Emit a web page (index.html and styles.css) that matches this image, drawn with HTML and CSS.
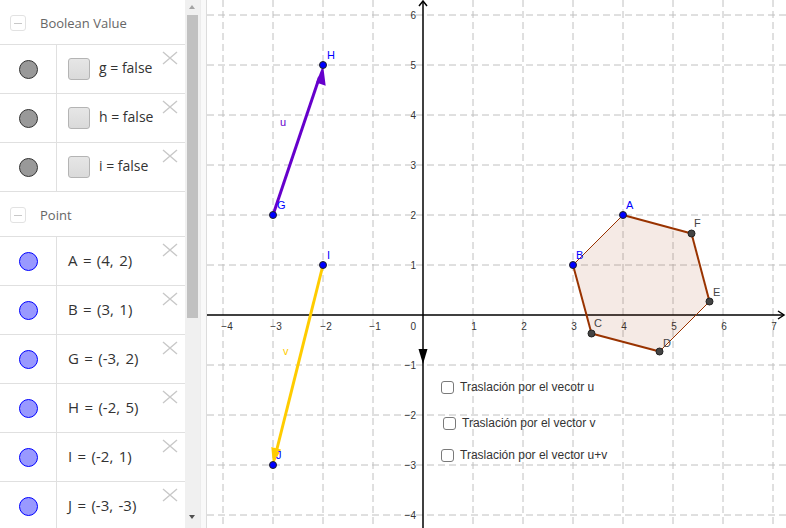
FILE: index.html
```html
<!DOCTYPE html>
<html>
<head>
<meta charset="utf-8">
<link rel="stylesheet" href="styles.css">
</head>
<body>
<div class="app">
  <aside class="sidebar">
    <div class="list">
      <div class="group">
        <span class="minus"><span class="minus-bar"></span></span>
        <span class="group-title">Boolean Value</span>
      </div>
      <div class="row">
        <div class="marker"><span class="dot dot-gray"></span></div>
        <div class="content"><span class="cb"></span><span class="expr">g = false</span></div>
        <svg class="close" viewBox="0 0 16 14"><path d="M1 1 L15 13 M15 1 L1 13"/></svg>
      </div>
      <div class="row">
        <div class="marker"><span class="dot dot-gray"></span></div>
        <div class="content"><span class="cb"></span><span class="expr">h = false</span></div>
        <svg class="close" viewBox="0 0 16 14"><path d="M1 1 L15 13 M15 1 L1 13"/></svg>
      </div>
      <div class="row">
        <div class="marker"><span class="dot dot-gray"></span></div>
        <div class="content"><span class="cb"></span><span class="expr">i = false</span></div>
        <svg class="close" viewBox="0 0 16 14"><path d="M1 1 L15 13 M15 1 L1 13"/></svg>
      </div>
      <div class="group">
        <span class="minus"><span class="minus-bar"></span></span>
        <span class="group-title">Point</span>
      </div>
      <div class="row">
        <div class="marker"><span class="dot dot-blue"></span></div>
        <div class="content"><span class="expr expr-pt">A = (4, 2)</span></div>
        <svg class="close" viewBox="0 0 16 14"><path d="M1 1 L15 13 M15 1 L1 13"/></svg>
      </div>
      <div class="row">
        <div class="marker"><span class="dot dot-blue"></span></div>
        <div class="content"><span class="expr expr-pt">B = (3, 1)</span></div>
        <svg class="close" viewBox="0 0 16 14"><path d="M1 1 L15 13 M15 1 L1 13"/></svg>
      </div>
      <div class="row">
        <div class="marker"><span class="dot dot-blue"></span></div>
        <div class="content"><span class="expr expr-pt">G = (-3, 2)</span></div>
        <svg class="close" viewBox="0 0 16 14"><path d="M1 1 L15 13 M15 1 L1 13"/></svg>
      </div>
      <div class="row">
        <div class="marker"><span class="dot dot-blue"></span></div>
        <div class="content"><span class="expr expr-pt">H = (-2, 5)</span></div>
        <svg class="close" viewBox="0 0 16 14"><path d="M1 1 L15 13 M15 1 L1 13"/></svg>
      </div>
      <div class="row">
        <div class="marker"><span class="dot dot-blue"></span></div>
        <div class="content"><span class="expr expr-pt">I = (-2, 1)</span></div>
        <svg class="close" viewBox="0 0 16 14"><path d="M1 1 L15 13 M15 1 L1 13"/></svg>
      </div>
      <div class="row">
        <div class="marker"><span class="dot dot-blue"></span></div>
        <div class="content"><span class="expr expr-pt">J = (-3, -3)</span></div>
        <svg class="close" viewBox="0 0 16 14"><path d="M1 1 L15 13 M15 1 L1 13"/></svg>
      </div>
    </div>
    <div class="scrollbar">
      <span class="arrow-up"></span>
      <span class="thumb"></span>
      <span class="arrow-down"></span>
    </div>
  </aside>
  <div class="splitter"></div>
  <main class="graph">
    <svg class="canvas" viewBox="207 0 579 528" width="579" height="528">
      <rect x="207" y="0" width="579" height="528" fill="#ffffff"/>
      <g class="grid">
        <line x1="223" y1="0" x2="223" y2="528"/>
        <line x1="273" y1="0" x2="273" y2="528"/>
        <line x1="323" y1="0" x2="323" y2="528"/>
        <line x1="373" y1="0" x2="373" y2="528"/>
        <line x1="473" y1="0" x2="473" y2="528"/>
        <line x1="523" y1="0" x2="523" y2="528"/>
        <line x1="573" y1="0" x2="573" y2="528"/>
        <line x1="623" y1="0" x2="623" y2="528"/>
        <line x1="673" y1="0" x2="673" y2="528"/>
        <line x1="723" y1="0" x2="723" y2="528"/>
        <line x1="773" y1="0" x2="773" y2="528"/>
        <line x1="207" y1="15" x2="786" y2="15"/>
        <line x1="207" y1="65" x2="786" y2="65"/>
        <line x1="207" y1="115" x2="786" y2="115"/>
        <line x1="207" y1="165" x2="786" y2="165"/>
        <line x1="207" y1="215" x2="786" y2="215"/>
        <line x1="207" y1="265" x2="786" y2="265"/>
        <line x1="207" y1="365" x2="786" y2="365"/>
        <line x1="207" y1="415" x2="786" y2="415"/>
        <line x1="207" y1="465" x2="786" y2="465"/>
        <line x1="207" y1="515" x2="786" y2="515"/>
      </g>
      <g class="axes">
        <line x1="207" y1="315" x2="784" y2="315"/>
        <polyline points="778,311 784,315 778,319"/>
        <line x1="423" y1="528" x2="423" y2="1"/>
        <polyline points="419,6 423,1 427,6"/>
      </g>
      <polygon points="418.5,349 427.5,349 423,364" fill="#000"/>
      <g class="ticks">
        <text x="227" y="330" text-anchor="middle">−4</text>
        <text x="276" y="330" text-anchor="middle">−3</text>
        <text x="326" y="330" text-anchor="middle">−2</text>
        <text x="375" y="330" text-anchor="middle">−1</text>
        <text x="416" y="330" text-anchor="end">0</text>
        <text x="474" y="330" text-anchor="middle">1</text>
        <text x="524" y="330" text-anchor="middle">2</text>
        <text x="574" y="330" text-anchor="middle">3</text>
        <text x="624" y="330" text-anchor="middle">4</text>
        <text x="674" y="330" text-anchor="middle">5</text>
        <text x="724" y="330" text-anchor="middle">6</text>
        <text x="774" y="330" text-anchor="middle">7</text>
        <text x="416" y="19" text-anchor="end">6</text>
        <text x="416" y="69" text-anchor="end">5</text>
        <text x="416" y="119" text-anchor="end">4</text>
        <text x="416" y="169" text-anchor="end">3</text>
        <text x="416" y="219" text-anchor="end">2</text>
        <text x="416" y="269" text-anchor="end">1</text>
        <text x="416" y="369" text-anchor="end">−1</text>
        <text x="416" y="419" text-anchor="end">−2</text>
        <text x="416" y="469" text-anchor="end">−3</text>
        <text x="416" y="519" text-anchor="end">−4</text>
      </g>
      <polygon class="poly-fill" points="623,215 691.5,233.5 709.5,301.5 659.5,351.5 591.5,333.5 573,265"/>
      <g class="poly-edge">
        <line x1="623" y1="215" x2="691.5" y2="233.5"/>
        <line x1="691.5" y1="233.5" x2="709.5" y2="301.5"/>
        <line x1="659.5" y1="351.5" x2="591.5" y2="333.5"/>
        <line x1="591.5" y1="333.5" x2="573" y2="265"/>
      </g>
      <g class="poly-thin">
        <line x1="573" y1="265" x2="623" y2="215"/>
        <line x1="709.5" y1="301.5" x2="659.5" y2="351.5"/>
      </g>
      <line class="vec-u" x1="273" y1="215" x2="319.5" y2="77"/>
      <polygon points="323,65 316.2,82.5 325.7,85.7" fill="#6600cc"/>
      <line class="vec-v" x1="323" y1="265" x2="276.2" y2="452"/>
      <polygon points="273,465 271.3,447 281,449.4" fill="#ffcc00"/>
      <circle class="pt-blue" cx="323" cy="65" r="3.5"/>
      <circle class="pt-blue" cx="273" cy="215" r="3.5"/>
      <circle class="pt-blue" cx="323" cy="265" r="3.5"/>
      <circle class="pt-blue" cx="273" cy="465" r="3.5"/>
      <circle class="pt-blue" cx="623" cy="215" r="3.5"/>
      <circle class="pt-blue" cx="573" cy="265" r="3.5"/>
      <circle class="pt-gray" cx="691.5" cy="233.5" r="3.5"/>
      <circle class="pt-gray" cx="709.5" cy="301.5" r="3.5"/>
      <circle class="pt-gray" cx="659.5" cy="351.5" r="3.5"/>
      <circle class="pt-gray" cx="591.5" cy="333.5" r="3.5"/>
      <g class="lbl-blue">
        <text x="327" y="59">H</text>
        <text x="277" y="209">G</text>
        <text x="327" y="259">I</text>
        <text x="276" y="459">J</text>
        <text x="626" y="209">A</text>
        <text x="576" y="259">B</text>
      </g>
      <g class="lbl-dark">
        <text x="594" y="327">C</text>
        <text x="663" y="347">D</text>
        <text x="713" y="296">E</text>
        <text x="694" y="227">F</text>
      </g>
      <text class="lbl-u" x="280" y="126">u</text>
      <text class="lbl-v" x="283" y="355">v</text>
    </svg>
    <label class="toggle t1"><span class="box"></span>Traslación por el vecotr u</label>
    <label class="toggle t2"><span class="box"></span>Traslación por el vector v</label>
    <label class="toggle t3"><span class="box"></span>Traslación por el vector u+v</label>
  </main>
</div>
</body>
</html>
```
FILE: styles.css
```css
html, body {
  margin: 0;
  padding: 0;
  background: #ffffff;
  overflow: hidden;
}
.app {
  display: flex;
  width: 786px;
  height: 528px;
  overflow: hidden;
  font-family: "Open Sans", "DejaVu Sans", sans-serif;
}
.sidebar {
  width: 200px;
  flex: none;
  display: flex;
  height: 528px;
  overflow: hidden;
  background: #fff;
}
.list {
  width: 185px;
  flex: none;
  display: flex;
  flex-direction: column;
}
.group {
  height: 44px;
  flex: none;
  border-bottom: 1px solid #e0e0e0;
  display: flex;
  align-items: center;
  padding-left: 10px;
  box-sizing: content-box;
}
.minus {
  width: 14px;
  height: 14px;
  border: 1px solid #e2e2e2;
  border-radius: 3px;
  display: flex;
  align-items: center;
  justify-content: center;
  margin-top: 2px;
}
.minus-bar {
  width: 8px;
  height: 1px;
  background: #c8c8c8;
}
.group-title {
  margin-left: 14px;
  font-size: 13px;
  color: #666666;
  margin-top: 1px;
}
.row {
  height: 48px;
  flex: none;
  border-bottom: 1px solid #e0e0e0;
  display: flex;
  position: relative;
}
.marker {
  width: 56px;
  flex: none;
  border-right: 1px solid #e0e0e0;
  display: flex;
  align-items: center;
  justify-content: center;
}
.dot {
  width: 17px;
  height: 17px;
  border-radius: 50%;
  margin-left: 1px;
}
.dot-gray {
  background: #999999;
  border: 1px solid #333333;
}
.dot-blue {
  background: #9999ff;
  border: 1px solid #0000ff;
}
.content {
  display: flex;
  align-items: center;
  padding-left: 11px;
}
.cb {
  width: 20px;
  height: 20px;
  border: 1px solid #b4b4b4;
  border-radius: 3px;
  background: linear-gradient(#e6e6e6, #dadada);
  margin-right: 9px;
}
.expr {
  font-size: 14px;
  line-height: 16px;
  color: #333333;
  margin-top: -3px;
}
.expr-pt {
  font-size: 15px;
  word-spacing: 1.5px;
  margin-top: -2px;
}
.close {
  position: absolute;
  right: 7px;
  top: 6px;
  width: 16px;
  height: 14px;
  fill: none;
  stroke: #c8c8c8;
  stroke-width: 1.4;
}
.scrollbar {
  width: 15px;
  flex: none;
  background: #f0f0f0;
  position: relative;
}
.thumb {
  position: absolute;
  left: 2px;
  width: 11px;
  top: 15px;
  height: 303px;
  background: #c1c1c1;
}
.arrow-up {
  position: absolute;
  left: 4px;
  top: 5px;
  width: 0;
  height: 0;
  border-left: 3.5px solid transparent;
  border-right: 3.5px solid transparent;
  border-bottom: 4px solid #a3a3a3;
}
.arrow-down {
  position: absolute;
  left: 4px;
  top: 515px;
  width: 0;
  height: 0;
  border-left: 3.5px solid transparent;
  border-right: 3.5px solid transparent;
  border-top: 4px solid #505050;
}
.splitter {
  width: 7px;
  flex: none;
  box-sizing: border-box;
  background: #f9f9f9;
  border-left: 1px solid #ececec;
  border-right: 1px solid #dcdcdc;
}
.graph {
  position: relative;
  width: 579px;
  height: 528px;
  flex: none;
}
.canvas {
  display: block;
}
.grid line {
  stroke: #c0c0c0;
  stroke-width: 1;
  stroke-dasharray: 7 4;
}
.axes line, .axes polyline {
  stroke: #000000;
  stroke-width: 1.5;
  fill: none;
}
.ticks text {
  font-family: "Liberation Sans", Arial, sans-serif;
  font-size: 10px;
  fill: #333333;
}
.poly-fill {
  fill: #993300;
  fill-opacity: 0.1;
  stroke: none;
}
.poly-edge line {
  stroke: #993300;
  stroke-width: 2;
}
.poly-thin line {
  stroke: #993300;
  stroke-width: 1;
}
.vec-u {
  stroke: #6600cc;
  stroke-width: 3;
}
.vec-v {
  stroke: #ffcc00;
  stroke-width: 3;
}
.pt-blue {
  fill: #0000ff;
  stroke: #222222;
  stroke-width: 1;
}
.pt-gray {
  fill: #444444;
  stroke: #222222;
  stroke-width: 1;
}
.lbl-blue text, .lbl-dark text, .lbl-u, .lbl-v {
  font-family: "Liberation Sans", Arial, sans-serif;
  font-size: 11px;
}
.lbl-blue text {
  fill: #0000ff;
}
.lbl-dark text {
  fill: #444444;
}
.lbl-u {
  fill: #6600cc;
}
.lbl-v {
  fill: #ffcc00;
}
.toggle {
  position: absolute;
  display: flex;
  align-items: center;
  font-family: "Liberation Sans", Arial, sans-serif;
  font-size: 12px;
  color: #333333;
  white-space: nowrap;
}
.toggle .box {
  width: 11px;
  height: 11px;
  border: 1px solid #7a7a7a;
  border-radius: 3px;
  background: #fff;
  margin-right: 6px;
}
.t1 {
  left: 234px;
  top: 380px;
}
.t2 {
  left: 236px;
  top: 416px;
}
.t3 {
  left: 234px;
  top: 448px;
}
```
